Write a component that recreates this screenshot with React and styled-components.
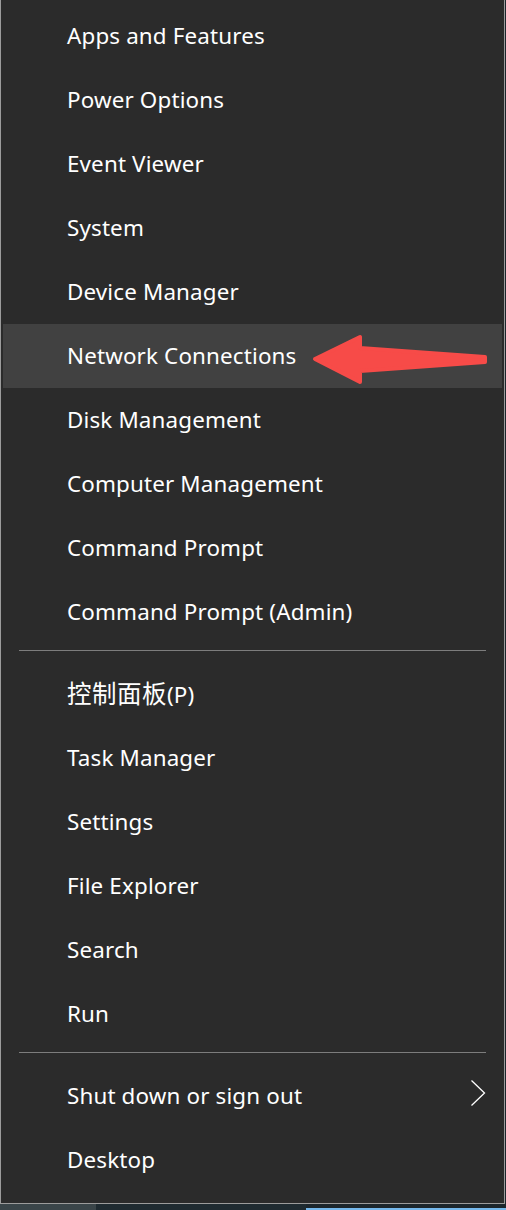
import React from "react";
import styled, { createGlobalStyle } from "styled-components";

const GlobalStyle = createGlobalStyle`
  html, body {
    margin: 0;
    padding: 0;
    background: #1c262c;
  }
  body {
    font-family: "Noto Sans", "Noto Sans CJK SC", sans-serif;
  }
`;

const groups = [
  [
    "Apps and Features",
    "Power Options",
    "Event Viewer",
    "System",
    "Device Manager",
    "Network Connections",
    "Disk Management",
    "Computer Management",
    "Command Prompt",
    "Command Prompt (Admin)",
  ],
  ["控制面板(P)", "Task Manager", "Settings", "File Explorer", "Search", "Run"],
  ["Shut down or sign out", "Desktop"],
];

// split CJK characters out so they can get their own size
const renderLabel = (label) =>
  label.split(/([\u4e00-\u9fff]+)/).map((part, i) =>
    /[\u4e00-\u9fff]/.test(part) ? <Cjk key={i}>{part}</Cjk> : part
  );

const Arrow = () => (
  <ArrowSvg width="490" height="64" viewBox="0 0 490 64">
    <polygon
      points="312,35 357,13 357,24 482,33 482,38 357,47 357,58"
      fill="#f74b48"
      stroke="#f74b48"
      strokeWidth="4"
      strokeLinejoin="round"
    />
  </ArrowSvg>
);

const Chevron = () => (
  <ChevronSvg width="20" height="30" viewBox="0 0 20 30">
    <polyline
      points="2.5,2.5 15.5,15 2.5,27.5"
      fill="none"
      stroke="#ffffff"
      strokeWidth="1.3"
    />
  </ChevronSvg>
);

const App = () => {
  return (
    <>
      <GlobalStyle />
      <Menu>
        {groups.map((group, gi) => (
          <React.Fragment key={gi}>
            {gi > 0 && <Separator />}
            {group.map((label) => {
              const active = label === "Network Connections";
              return (
                <Row key={label} $active={active}>
                  <Label>{renderLabel(label)}</Label>
                  {active && <Arrow />}
                  {label === "Shut down or sign out" && <Chevron />}
                </Row>
              );
            })}
          </React.Fragment>
        ))}
      </Menu>
      <Taskbar>
        <TaskLeft />
        <TaskMid />
        <TaskActive />
      </Taskbar>
    </>
  );
};

const Menu = styled.div`
  width: 505px;
  box-sizing: border-box;
  background: #2b2b2b;
  border: 1px solid #9c9c9c;
  border-top: none;
  padding: 4px 0 11px;
  display: flex;
  flex-direction: column;
`;

const Row = styled.div`
  position: relative;
  height: 64px;
  margin: 0 2px;
  padding-left: 64px;
  display: flex;
  align-items: center;
  background: ${(p) => (p.$active ? "#414141" : "transparent")};
`;

const Label = styled.span`
  color: #ffffff;
  font-size: 22.4px;
  line-height: 1;
  padding-top: 1px;
  letter-spacing: 0.15px;
  white-space: nowrap;
`;

const Cjk = styled.span`
  font-size: 24.5px;
  letter-spacing: 0.5px;
`;

const Separator = styled.div`
  height: 18px;
  margin: 0 18px;
  position: relative;
  &::after {
    content: "";
    position: absolute;
    left: 0;
    right: 0;
    top: 6px;
    height: 1px;
    background: #7d7d7d;
  }
`;

const ArrowSvg = styled.svg`
  position: absolute;
  left: 0;
  top: 0;
`;

const ChevronSvg = styled.svg`
  position: absolute;
  left: 466px;
  top: 14px;
`;

const Taskbar = styled.div`
  height: 6px;
  display: flex;
  align-items: flex-end;
`;

const TaskLeft = styled.div`
  width: 96px;
  height: 100%;
  background: #3a4549;
`;

const TaskMid = styled.div`
  width: 210px;
  height: 100%;
  background: #1f2b31;
`;

const TaskActive = styled.div`
  flex: 1;
  height: 2px;
  background: #76b9ed;
`;

export default App;
